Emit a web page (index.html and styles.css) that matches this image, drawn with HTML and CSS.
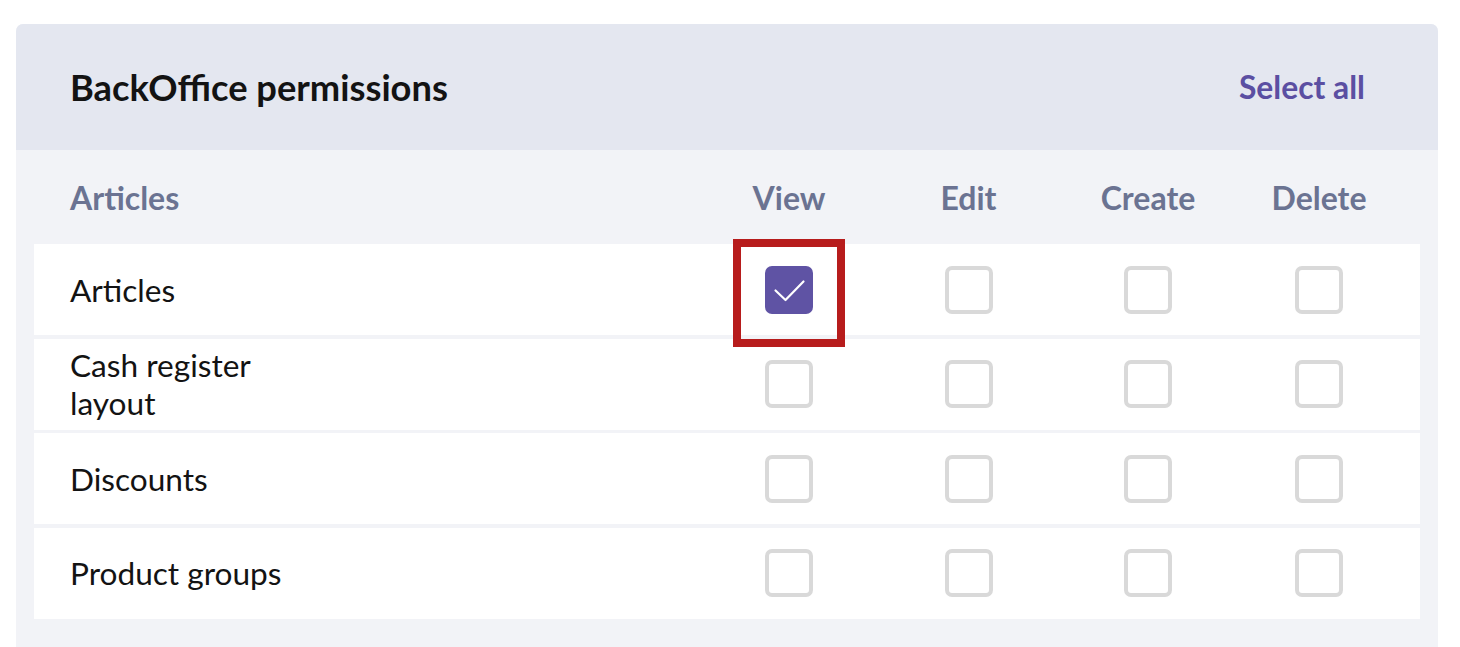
FILE: index.html
```html
<!DOCTYPE html>
<html>
<head>
<meta charset="utf-8">
<link rel="stylesheet" href="styles.css">
</head>
<body>
<div class="card">
  <div class="card-header">
    <h2 class="title">BackOffice permissions</h2>
    <span class="select-all">Select all</span>
  </div>
  <div class="card-body">
    <div class="grid head">
      <div class="label">Articles</div>
      <div class="col">View</div>
      <div class="col">Edit</div>
      <div class="col">Create</div>
      <div class="col">Delete</div>
    </div>
    <div class="rows">
      <div class="grid row">
        <div class="label">Articles</div>
        <div class="col">
          <span class="cb checked">
            <svg viewBox="0 0 48 48" width="48" height="48"><path d="M10.5 24.5 L20.5 34 L38.5 15.5" fill="none" stroke="#fff" stroke-width="2.2" stroke-linecap="round" stroke-linejoin="round"/></svg>
            <span class="highlight"></span>
          </span>
        </div>
        <div class="col"><span class="cb"></span></div>
        <div class="col"><span class="cb"></span></div>
        <div class="col"><span class="cb"></span></div>
      </div>
      <div class="grid row">
        <div class="label">Cash register layout</div>
        <div class="col"><span class="cb"></span></div>
        <div class="col"><span class="cb"></span></div>
        <div class="col"><span class="cb"></span></div>
        <div class="col"><span class="cb"></span></div>
      </div>
      <div class="grid row">
        <div class="label">Discounts</div>
        <div class="col"><span class="cb"></span></div>
        <div class="col"><span class="cb"></span></div>
        <div class="col"><span class="cb"></span></div>
        <div class="col"><span class="cb"></span></div>
      </div>
      <div class="grid row">
        <div class="label">Product groups</div>
        <div class="col"><span class="cb"></span></div>
        <div class="col"><span class="cb"></span></div>
        <div class="col"><span class="cb"></span></div>
        <div class="col"><span class="cb"></span></div>
      </div>
    </div>
  </div>
</div>
</body>
</html>
```

FILE: styles.css
```css
html, body {
  margin: 0;
  padding: 0;
  background: #ffffff;
  font-family: Lato, "Liberation Sans", sans-serif;
}

body {
  padding: 24px 22px 0 16px;
  overflow: hidden;
  height: 647px;
  box-sizing: border-box;
}

.card {
  border-radius: 7px 7px 0 0;
  background: #f2f3f7;
  min-height: 700px;
}

.card-header {
  height: 126px;
  background: #e4e7f0;
  border-radius: 7px 7px 0 0;
  display: flex;
  align-items: center;
  justify-content: space-between;
  padding: 0 73px 0 54px;
  box-sizing: border-box;
}

.title {
  margin: 0;
  font-size: 36.3px;
  font-weight: 700;
  color: #131313;
}

.select-all {
  font-size: 31.8px;
  font-weight: 700;
  color: #5b4fa2;
}

.card-body {
  padding: 0 18px;
}

.rows {
  display: flex;
  flex-direction: column;
  gap: 3.5px;
}

.grid {
  display: grid;
  grid-template-columns: 1fr 180px 179px 180px 162px;
  align-items: center;
  padding: 0 20px 0 36px;
}

.head {
  height: 94px;
  font-size: 32px;
  font-weight: 700;
  color: #6b7392;
}

.row {
  height: 91px;
  background: #ffffff;
  font-size: 31.6px;
  color: #131313;
  line-height: 38px;
}

.row .label {
  max-width: 240px;
}

.col {
  display: flex;
  justify-content: center;
}

.cb {
  position: relative;
  width: 48px;
  height: 48px;
  box-sizing: border-box;
  border: 4px solid #d9d9d9;
  border-radius: 7px;
  display: block;
}

.cb.checked {
  border: none;
  background: #5f53a4;
}

.cb svg {
  display: block;
}

.highlight {
  position: absolute;
  left: -32px;
  top: -27px;
  width: 112px;
  height: 108px;
  box-sizing: border-box;
  border: 8px solid #b71c1c;
}
```
